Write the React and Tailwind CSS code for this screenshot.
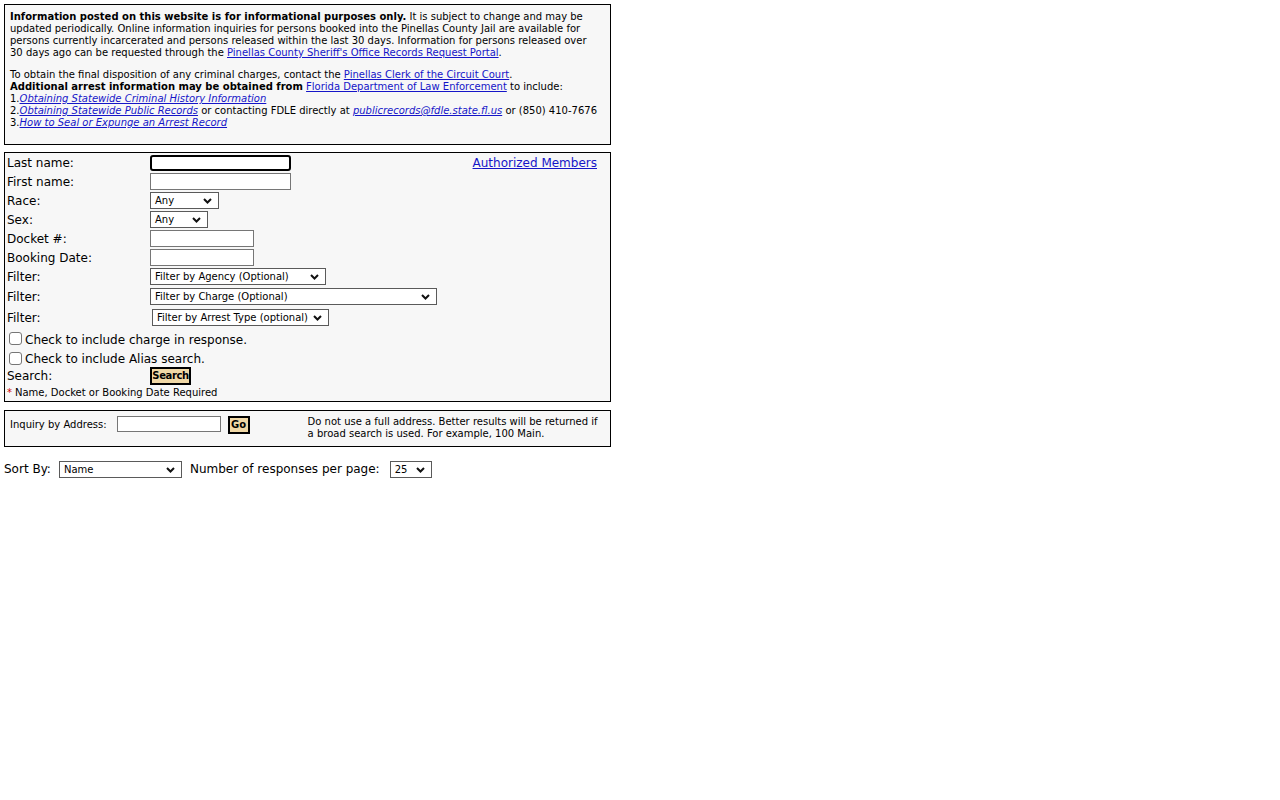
import React from 'react';

const LINK = "text-[#1515c8] underline";

function Chevron() {
  return (
    <svg width="9" height="6" viewBox="0 0 9 6" className="absolute right-[6px] top-[5px] pointer-events-none">
      <path d="M1 1 L4.5 4.5 L8 1" fill="none" stroke="#111" strokeWidth="2" />
    </svg>
  );
}

function Select({ w, value, className = "" }) {
  return (
    <div className={`relative inline-flex items-center h-[17px] border border-[#5a5a5a] bg-white ${w} ${className}`}>
      <span className="pl-[4px] pt-[1px] text-[10px] leading-none whitespace-nowrap">{value}</span>
      <Chevron />
    </div>
  );
}

function TextBox({ w, focused }) {
  return focused ? (
    <input className={`h-[16px] ${w} bg-white border-2 border-black rounded-[3px] outline-none`} />
  ) : (
    <input className={`h-[17px] ${w} bg-white border border-[#767676] outline-none`} />
  );
}

function Row({ label, h, children }) {
  return (
    <div className={`flex items-center ${h}`}>
      <div className="w-[143px] shrink-0 text-[12px]">{label}</div>
      {children}
    </div>
  );
}

function Check({ label }) {
  return (
    <label className="flex items-center h-full text-[12px]">
      <span className="ml-[2px] w-[13px] h-[13px] border border-[#767676] rounded-[3px] bg-white" />
      <span className="ml-[3px] mt-[2px]">{label}</span>
    </label>
  );
}

export default function App() {
  return (
    <div className="min-h-screen bg-white p-1 text-black font-['DejaVu_Sans',Verdana,sans-serif]">
      {/* notice */}
      <div className="w-[607px] border border-black bg-[#f7f7f7] pt-[6px] pb-[15px] px-[5px] text-[10px] leading-[12px] whitespace-nowrap">
        <p>
          <b>Information posted on this website is for informational purposes only.</b> It is subject to change and may be<br />
          updated periodically. Online information inquiries for persons booked into the Pinellas County Jail are available for<br />
          persons currently incarcerated and persons released within the last 30 days. Information for persons released over<br />
          30 days ago can be requested through the <a href="#" className={LINK}>Pinellas County Sheriff's Office Records Request Portal</a>.
        </p>
        <p className="mt-[10px]">
          To obtain the final disposition of any criminal charges, contact the <a href="#" className={LINK}>Pinellas Clerk of the Circuit Court</a>.<br />
          <b>Additional arrest information may be obtained from</b> <a href="#" className={LINK}>Florida Department of Law Enforcement</a> to include:<br />
          1.<a href="#" className={`${LINK} italic`}>Obtaining Statewide Criminal History Information</a><br />
          2.<a href="#" className={`${LINK} italic`}>Obtaining Statewide Public Records</a> or contacting FDLE directly at <a href="#" className={`${LINK} italic`}>publicrecords@fdle.state.fl.us</a> or (850) 410-7676<br />
          3.<a href="#" className={`${LINK} italic`}>How to Seal or Expunge an Arrest Record</a>
        </p>
      </div>

      {/* search form */}
      <div className="mt-[7px] w-[607px] border border-black bg-[#f7f7f7] pl-[2px]">
        <div className="flex items-center h-[19px] pt-[1px]">
          <div className="w-[143px] shrink-0 text-[12px]">Last name:</div>
          <TextBox w="w-[141px]" focused />
          <a href="#" className={`${LINK} ml-auto mr-[13px] text-[12px]`}>Authorized Members</a>
        </div>
        <Row label="First name:" h="h-[19px]"><TextBox w="w-[141px]" /></Row>
        <Row label="Race:" h="h-[19px]"><Select w="w-[69px]" value="Any" /></Row>
        <Row label="Sex:" h="h-[19px]"><Select w="w-[58px]" value="Any" /></Row>
        <Row label="Docket #:" h="h-[19px]"><TextBox w="w-[104px]" /></Row>
        <Row label="Booking Date:" h="h-[19px]"><TextBox w="w-[104px]" /></Row>
        <Row label="Filter:" h="h-[19px]"><Select w="w-[176px]" value="Filter by Agency (Optional)" /></Row>
        <Row label="Filter:" h="h-[21px]"><Select w="w-[287px]" value="Filter by Charge (Optional)" /></Row>
        <Row label="Filter:" h="h-[21px]"><Select w="w-[177px]" value="Filter by Arrest Type (optional)" className="ml-[2px]" /></Row>
        <div className="h-[21px]"><Check label="Check to include charge in response." /></div>
        <div className="h-[18px]"><Check label="Check to include Alias search." /></div>
        <Row label="Search:" h="h-[17px]">
          <button className="h-[18px] w-[41px] border-2 border-black bg-[#f0d8a6] text-[10px] font-bold leading-none tracking-[-0.4px] px-0">Search</button>
        </Row>
        <div className="h-[17px] flex items-center text-[10px]">
          <span className="text-[#d00000] mr-[3px]">*</span>Name, Docket or Booking Date Required
        </div>
      </div>

      {/* address inquiry */}
      <div className="mt-[8px] w-[607px] border border-black bg-[#f7f7f7] flex items-start pl-[5px] pt-[5px] pb-[6px] text-[10px] leading-[12px]">
        <span className="mt-[3px]">Inquiry by Address:</span>
        <input className="ml-[10px] h-[16px] w-[104px] bg-white border border-[#767676] outline-none" />
        <button className="ml-[7px] h-[18px] w-[22px] border-2 border-black bg-[#f0d8a6] font-bold leading-none">Go</button>
        <p className="ml-[58px] whitespace-nowrap">
          Do not use a full address. Better results will be returned if<br />
          a broad search is used. For example, 100 Main.
        </p>
      </div>

      {/* sort options */}
      <div className="mt-[13px] flex items-center text-[12px]">
        <span>Sort By:</span>
        <Select w="w-[123px]" value="Name" className="ml-[8px]" />
        <span className="ml-[8px]">Number of responses per page:</span>
        <Select w="w-[42px]" value="25" className="ml-[10px]" />
      </div>
    </div>
  );
}
